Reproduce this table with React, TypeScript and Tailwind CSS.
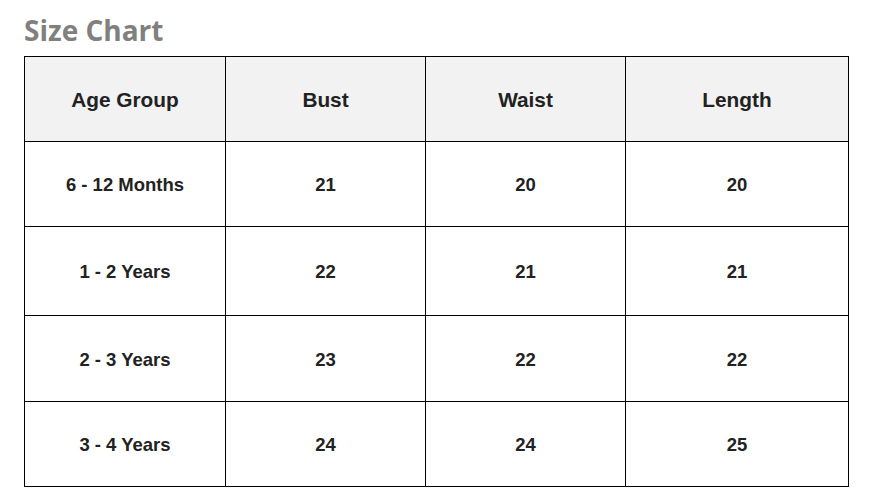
const rows = [
  { age: '6 - 12 Months', bust: '21', waist: '20', length: '20', h: 'h-[85px]' },
  { age: '1 - 2 Years', bust: '22', waist: '21', length: '21', h: 'h-[89px]' },
  { age: '2 - 3 Years', bust: '23', waist: '22', length: '22', h: 'h-[86px]' },
  { age: '3 - 4 Years', bust: '24', waist: '24', length: '25', h: 'h-[85px]' },
];

export default function App() {
  return (
    <div className="min-h-screen bg-white pl-6 pt-[12px]">
      <h1 className="font-['Open_Sans',sans-serif] text-[28px] font-bold leading-[36px] text-[#808080]">
        Size Chart
      </h1>
      <table className="mt-[8px] w-[824px] table-fixed border-collapse font-['Liberation_Sans',Arial,sans-serif] text-[#222]">
        <colgroup>
          <col className="w-[201px]" />
          <col className="w-[200px]" />
          <col className="w-[200px]" />
          <col className="w-[223px]" />
        </colgroup>
        <thead>
          <tr className="h-[85px] bg-[#f2f2f2]">
            {['Age Group', 'Bust', 'Waist', 'Length'].map((label) => (
              <th key={label} className="border border-black p-0 pt-[2px] text-center text-[20.8px] font-bold">
                {label}
              </th>
            ))}
          </tr>
        </thead>
        <tbody>
          {rows.map((r) => (
            <tr key={r.age} className={r.h}>
              <td className="border border-black p-0 pt-[2px] text-center text-[18.5px] font-bold">{r.age}</td>
              <td className="border border-black p-0 pt-[2px] text-center text-[18.5px] font-bold">{r.bust}</td>
              <td className="border border-black p-0 pt-[2px] text-center text-[18.5px] font-bold">{r.waist}</td>
              <td className="border border-black p-0 pt-[2px] text-center text-[18.5px] font-bold">{r.length}</td>
            </tr>
          ))}
        </tbody>
      </table>
    </div>
  );
}
